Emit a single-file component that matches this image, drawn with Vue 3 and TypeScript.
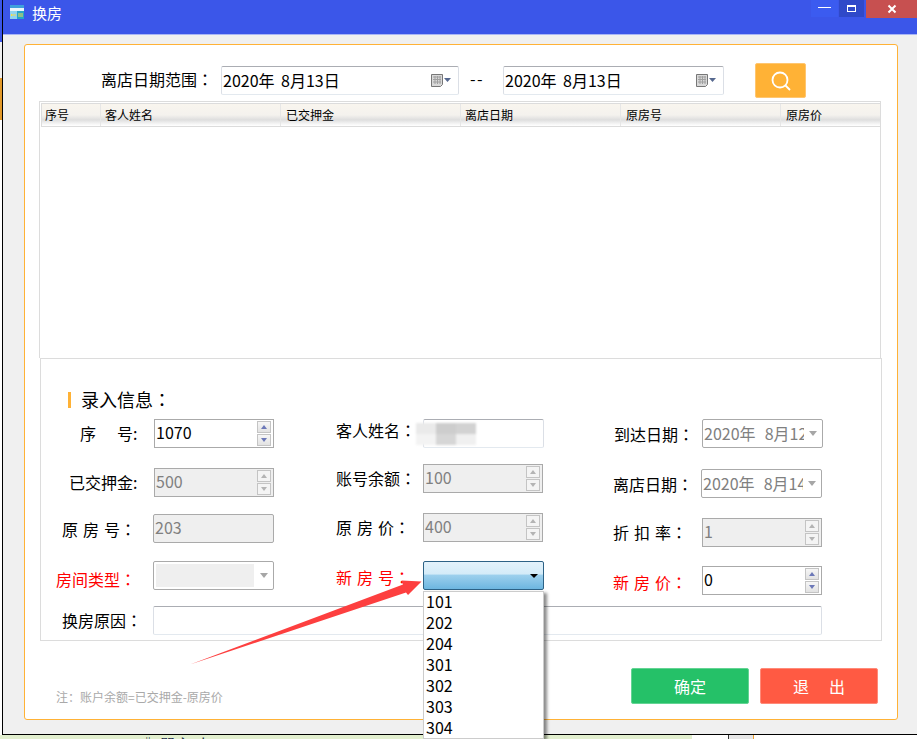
<script setup lang="ts">
type Field = {
  label: string
  kind: 'spin' | 'input' | 'date' | 'combo' | 'open'
  value?: string
  off?: boolean
  red?: boolean
  wide?: boolean
  half?: boolean
  left: number
  top: number
  width: number
  right?: number
  shift?: number
  blur?: boolean
}

const columnNames = ['序号', '客人姓名', '已交押金', '离店日期', '原房号', '原房价']
const roomOptions = ['101', '202', '204', '301', '302', '303', '304']

const columns: { width: number; fields: Field[] }[] = [
  {
    width: 233,
    fields: [
      { label: '序', kind: 'spin', value: '1070', left: 39, top: 0, width: 120, half: true, shift: -2 },
      { label: '已交押金:', kind: 'spin', value: '500', off: true, left: 28, top: 20, width: 120, shift: -2 },
      { label: '原房号：', kind: 'input', value: '203', off: true, wide: true, left: 21, top: 17, width: 121, shift: 0 },
      { label: '房间类型：', kind: 'combo', off: true, red: true, left: 15, top: 18, width: 121, shift: 6 },
    ],
  },
  {
    width: 270,
    fields: [
      { label: '客人姓名：', kind: 'input', left: 62, top: 0, width: 121, shift: -8, blur: true },
      { label: '账号余额：', kind: 'spin', value: '100', off: true, left: 62, top: 16, width: 120, right: 1, shift: -2 },
      { label: '原房价：', kind: 'spin', value: '400', off: true, wide: true, left: 62, top: 20, width: 120, right: 1, shift: -2 },
      { label: '新房号：', kind: 'open', red: true, wide: true, left: 62, top: 19, width: 121, shift: 2 },
    ],
  },
  {
    width: 279,
    fields: [
      { label: '到达日期：', kind: 'date', value: '2020年  8月12日', left: 70, top: 0, width: 121, shift: 0 },
      { label: '离店日期：', kind: 'date', value: '2020年  8月14日', left: 69, top: 21, width: 121, right: 1, shift: 0 },
      { label: '折扣率：', kind: 'spin', value: '1', off: true, wide: true, left: 69, top: 20, width: 120, right: 1, shift: -2 },
      { label: '新房价：', kind: 'spin', value: '0', red: true, wide: true, left: 69, top: 19, width: 120, right: 1, shift: 2 },
    ],
  },
]

const stem = (label: string) => (label.endsWith('：') ? label.slice(0, -1) : label)
</script>

<template>
  <div class="screen">
    <div class="top">
      <div class="edge">
        <i class="edge-blue"></i>
        <i class="edge-pale"></i>
        <i class="edge-orange"></i>
      </div>
      <div class="window">
        <header class="titlebar">
          <svg class="app-icon" width="14" height="14" viewBox="0 0 14 14">
            <rect width="14" height="3" fill="#3d9fdc" />
            <rect y="3" width="14" height="3" fill="#eaf4fb" />
            <rect y="6" width="7" height="8" fill="#8fd3ef" />
            <rect x="7" y="6" width="7" height="8" fill="#27a5c9" />
            <path d="M1 10h5M1 10l1-1M1 10l1 1" stroke="#f5dc4a" fill="none" />
            <path d="M8 9h5M8 11h5" stroke="#f5dc4a" />
          </svg>
          <span class="title-text">换房</span>
          <div class="win-buttons">
            <button class="win-btn win-min"><i></i></button>
            <button class="win-btn win-max"><i></i></button>
            <button class="win-btn win-close">
              <svg width="10" height="10" viewBox="0 0 10 10">
                <path d="M1.5 1.5l7 7M8.5 1.5l-7 7" stroke="#fff" stroke-width="2" />
              </svg>
            </button>
          </div>
        </header>

        <div class="body">
          <section class="card">
            <div class="filter">
              <span class="filter-label">离店日期范围<span class="colon">：</span></span>
              <div class="picker picker-a">
                <span class="date-text">2020年  8月13日</span>
                <svg width="20" height="13" viewBox="0 0 20 13">
                  <path d="M.5.5h11v10l-2 2h-9z" fill="#d9d9d9" stroke="#777" />
                  <path d="M2 3h8M2 5.5h8M2 8h8M4 2v8M6.5 2v8M9 2v8" stroke="#a0a0a0" />
                  <path d="M13 4h7l-3.500 4z" fill="#56688f" />
                </svg>
              </div>
              <span class="dash">--</span>
              <div class="picker picker-b">
                <span class="date-text">2020年  8月13日</span>
                <svg width="20" height="13" viewBox="0 0 20 13">
                  <path d="M.5.5h11v10l-2 2h-9z" fill="#d9d9d9" stroke="#777" />
                  <path d="M2 3h8M2 5.5h8M2 8h8M4 2v8M6.5 2v8M9 2v8" stroke="#a0a0a0" />
                  <path d="M13 4h7l-3.500 4z" fill="#56688f" />
                </svg>
              </div>
              <button class="search">
                <svg width="22" height="22" viewBox="0 0 22 22">
                  <circle cx="10" cy="10" r="7.500" fill="none" stroke="#fff" stroke-width="1.800" />
                  <path d="M15.500 15.500l4.500 4.500" stroke="#fff" stroke-width="1.800" />
                </svg>
              </button>
            </div>

            <div class="table">
              <div class="thead">
                <div v-for="name in columnNames" :key="name" class="th">{{ name }}</div>
              </div>
            </div>

            <div class="panel">
              <h3 class="panel-title"><i class="title-bar"></i><span>录入信息<span class="colon">：</span></span></h3>
              <div class="columns">
                <div v-for="(col, c) in columns" :key="c" class="column" :style="{ width: col.width + 'px' }">
                  <div
                    v-for="f in col.fields"
                    :key="f.label"
                    class="field"
                    :style="{ marginTop: f.top + 'px' }"
                  >
                    <span
                      class="label"
                      :class="{ red: f.red, wide: f.wide, half: f.half }"
                      :style="{ marginLeft: f.left + 'px', marginTop: (f.shift ?? 0) + 'px' }"
                    >{{ stem(f.label) }}<span v-if="f.label.endsWith('：')" class="colon">：</span><template v-if="f.half"><b class="label-gap"></b>号:</template></span>
                    <div
                      class="control"
                      :class="[f.kind, { off: f.off }]"
                      :style="{ width: f.width + 'px', marginRight: (f.right ?? 0) + 'px' }"
                    >
                      <template v-if="f.kind === 'spin'">
                        <span class="value">{{ f.value }}</span>
                        <span class="spinner">
                          <i class="spin-up"></i>
                          <i class="spin-down"></i>
                        </span>
                      </template>
                      <span v-else-if="f.kind === 'input'" class="value">{{ f.value }}</span>
                      <template v-else-if="f.kind === 'date'">
                        <span class="value clip">{{ f.value }}</span>
                        <i class="caret-gray"></i>
                      </template>
                      <template v-else-if="f.kind === 'combo'">
                        <span class="combo-fill"></span>
                        <i class="caret-gray"></i>
                      </template>
                      <template v-else-if="f.kind === 'open'">
                        <i class="caret-black"></i>
                        <ul class="menu">
                          <li v-for="room in roomOptions" :key="room">{{ room }}</li>
                        </ul>
                      </template>
                      <div v-if="f.blur" class="mosaic">
                        <i class="m1"></i><i class="m2"></i><i class="m3"></i>
                        <i class="m4"></i><i class="m5"></i><i class="m6"></i>
                      </div>
                    </div>
                  </div>
                </div>
              </div>
              <div class="reason">
                <span class="label reason-label">换房原因<span class="colon">：</span></span>
                <div class="control input reason-input"></div>
              </div>
            </div>

            <footer class="footer">
              <span class="note">注：账户余额=已交押金-原房价</span>
              <button class="action ok">确定</button>
              <button class="action quit">退<b class="quit-gap"></b>出</button>
            </footer>
          </section>
        </div>
      </div>
    </div>
    <div class="bottom">
      <div class="bottom-green"><span class="peek">‖ 單主 人</span></div>
      <div class="bottom-white"></div>
      <div class="bottom-gray"></div>
      <div class="bottom-end"></div>
    </div>

    <svg class="arrow" width="917" height="739" viewBox="0 0 917 739">
      <path d="M190 664.500L403 584.500L401.500 580.500L421.500 581.500L408 595L406 592.500Z" fill="#fd3f3f" />
    </svg>
  </div>
</template>

<style>
html,
body {
  margin: 0;
  background: #fff;
}
</style>

<style scoped>
* {
  box-sizing: border-box;
}
.screen {
  position: relative;
  width: 917px;
  height: 739px;
  overflow: hidden;
  font-family: "Noto Sans CJK SC", "Noto Sans", sans-serif;
  font-size: 16px;
  color: #000;
}
.colon {
  font-family: "Noto Sans CJK TC", "Noto Sans CJK SC", sans-serif;
  letter-spacing: 0;
}
.top {
  display: flex;
  height: 735px;
}
.edge {
  width: 2px;
  display: flex;
  flex-direction: column;
  background: #fff;
}
.edge i {
  display: block;
}
.edge-blue {
  height: 42px;
  background: #3b56e9;
}
.edge-pale {
  height: 36px;
  background: #f0f0f0;
}
.edge-orange {
  height: 42px;
  background: #e39a2b;
}
.window {
  flex: 1;
  display: flex;
  flex-direction: column;
  border-left: 1px solid #000;
  border-bottom: 1px solid #000;
  background: #f0f0f0;
}
.titlebar {
  height: 35px;
  flex: none;
  display: flex;
  align-items: flex-start;
  padding-left: 7px;
  background: #3b56e9;
  border-bottom: 1px solid #a9b6f5;
}
.app-icon {
  margin-top: 5px;
}
.title-text {
  margin-left: 8px;
  margin-top: 2px;
  font-size: 15px;
  line-height: 21px;
  color: #fff;
}
.win-buttons {
  margin-left: auto;
  display: flex;
}
.win-btn {
  display: flex;
  align-items: center;
  justify-content: center;
  padding: 0;
  border: 0;
}
.win-min {
  width: 27px;
  height: 17px;
  margin-right: 1px;
  background: #3b5bf0;
}
.win-min i {
  width: 13px;
  height: 1px;
  margin-bottom: 3px;
  background: #fff;
}
.win-max {
  width: 25px;
  height: 17px;
  margin-right: 2px;
  background: #2f49c9;
}
.win-max i {
  width: 9px;
  height: 7px;
  margin-bottom: 1px;
  border: 1px solid #fff;
  border-top-width: 2px;
}
.win-close {
  width: 51px;
  height: 18px;
  background: #c75050;
}
.body {
  padding: 9px 19px 0 21px;
}
.card {
  height: 676px;
  border: 1px solid #ffb236;
  border-radius: 3px;
  background: #fff;
}
.filter {
  display: flex;
  align-items: center;
  height: 35px;
  margin-top: 18px;
  padding-left: 76px;
}
.filter-label {
  width: 120px;
  margin-bottom: 3px;
}
.picker {
  height: 29px;
  display: flex;
  align-items: center;
  justify-content: space-between;
  padding: 0 7px 0 1px;
  border: 1px solid #dbdfe6;
  border-top-color: #abadb3;
  border-bottom-color: #e3e9ef;
  border-radius: 2px;
}
.picker-a {
  width: 238px;
}
.picker-b {
  width: 221px;
}
.date-text {
  white-space: pre;
  word-spacing: 3px;
  margin-top: -2px;
}
.dash {
  width: 44px;
  padding-left: 11px;
  letter-spacing: 1.500px;
  margin-bottom: 5px;
}
.search {
  width: 51px;
  height: 35px;
  margin-left: 31px;
  display: flex;
  align-items: center;
  justify-content: center;
  padding: 0;
  border: 1px solid #ffc670;
  border-radius: 2px;
  background: #ffb236;
}
.table {
  width: 842px;
  height: 257px;
  margin: 3px 0 0 14px;
  padding: 1px;
  border: 1px solid #dcdcdc;
  border-bottom: 0;
}
.thead {
  display: flex;
  height: 24px;
  width: 839px;
  border: 1px solid #dcdcdc;
  border-right: 0;
  background: linear-gradient(#f9f5ee 0%, #f4f2ee 50%, #dedede 72%, #f5f5f5 90%, #fff 100%);
}
.th {
  font-size: 12px;
  line-height: 22px;
  padding-left: 4px;
  border-right: 1px solid #e6e6e6;
  flex: none;
}
.th:nth-child(1) {
  width: 59px;
  padding-left: 3px;
}
.th:nth-child(2) {
  width: 180px;
}
.th:nth-child(3) {
  width: 180px;
  padding-left: 5px;
}
.th:nth-child(4),
.th:nth-child(5) {
  width: 160px;
}
.th:nth-child(5) {
  padding-left: 5px;
}
.th:nth-child(6) {
  width: 99px;
  padding-left: 5px;
  border-right: 0;
}
.panel {
  width: 842px;
  height: 283px;
  margin-left: 15px;
  border: 1px solid #dcdcdc;
  padding-top: 31px;
}
.panel-title {
  display: flex;
  align-items: center;
  height: 20px;
  margin: 0 0 9px 27px;
  font-size: 18px;
  font-weight: 400;
  line-height: 18px;
}
.title-bar {
  width: 3px;
  height: 16px;
  margin-right: 10px;
  background: #ffb236;
}
.panel-title span {
  margin-top: -2px;
}
.panel-title .colon {
  margin-top: 0;
}
.columns {
  display: flex;
}
.column {
  flex: none;
}
.field {
  display: flex;
  align-items: center;
  height: 29px;
}
.label {
  white-space: pre;
  line-height: 20px;
}
.label.wide {
  letter-spacing: 5px;
}
.label.wide .colon {
  margin-left: -5px;
}
.label-gap {
  display: inline-block;
  width: 21px;
}
.red {
  color: #f00;
}
.control {
  position: relative;
  height: 29px;
  margin-left: auto;
  display: flex;
  align-items: center;
  flex: none;
  border: 1px solid #aaa;
  background: #fff;
  padding-left: 1px;
}
.control.off {
  background: #efefef;
  color: #808080;
}
.control .value {
  line-height: 24px;
  margin-top: -4px;
}
.control.input,
.control.date,
.control.combo {
  border-radius: 2px;
}
.control.input:not(.off) {
  border-color: #dbdfe6;
  border-top-color: #abadb3;
  border-bottom-color: #e3e9ef;
}
.control.date {
  color: #808080;
  padding-right: 4px;
}
.control.date .value {
  margin-top: -2px;
}
.clip {
  flex: 1;
  overflow: hidden;
  white-space: pre;
  word-spacing: 1px;
  margin-right: 5px;
}
.caret-gray {
  flex: none;
  width: 0;
  height: 0;
  border: 4px solid transparent;
  border-bottom: 0;
  border-top: 5px solid #a6a6a6;
  margin-right: 1px;
}
.control.combo {
  background: #fff;
  padding: 2px 4px 2px 2px;
  justify-content: space-between;
}
.combo-fill {
  width: 98px;
  height: 23px;
  background: #efefef;
}
.spinner {
  position: absolute;
  right: 2px;
  top: 1px;
  width: 14px;
  display: flex;
  flex-direction: column;
  gap: 1px;
}
.spinner i {
  display: flex;
  align-items: center;
  justify-content: center;
  height: 12px;
  border: 1px solid #c4c4c4;
  background: linear-gradient(#f6f6f6, #e2e2e2);
}
.spinner i::after {
  content: "";
  border: 3px solid transparent;
}
.spin-up::after {
  border-top: 0 !important;
  border-bottom: 4px solid #6c78b8 !important;
}
.spin-down::after {
  border-bottom: 0 !important;
  border-top: 4px solid #6c78b8 !important;
}
.off .spin-up::after {
  border-bottom-color: #b4b4b4 !important;
}
.off .spin-down::after {
  border-top-color: #b4b4b4 !important;
}
.off .spinner i {
  background: #f4f4f4;
}
.control.open {
  justify-content: flex-end;
  padding-right: 5px;
  border: 1px solid #2d6286;
  border-radius: 2px;
  background: linear-gradient(#e3f2fb 0%, #d3ebf8 45%, #9dd0ed 48%, #6db6e0 100%);
}
.caret-black {
  width: 0;
  height: 0;
  border: 4px solid transparent;
  border-bottom: 0;
  border-top: 4px solid #000;
}
.menu {
  position: absolute;
  z-index: 3;
  left: -1px;
  top: 29px;
  width: 121px;
  height: 148px;
  margin: 0;
  padding: 0 0 0 2px;
  list-style: none;
  background: #fff;
  border: 1px solid #ccc;
  box-shadow: 3px 2px 3px rgba(0, 0, 0, 0.45);
}
.menu li {
  height: 21px;
  line-height: 19px;
}
.mosaic {
  position: absolute;
  left: -8px;
  top: 3px;
  width: 60px;
  height: 22px;
  display: grid;
  grid-template-columns: repeat(3, 20px);
  grid-template-rows: repeat(2, 11px);
  filter: blur(1.200px);
}
.m1 {
  background: #eaeaea;
}
.m2 {
  background: #cdcdcd;
}
.m3 {
  background: #d2d2d2;
}
.m4 {
  background: #f3f3f3;
}
.m5 {
  background: #d6d6d6;
}
.m6 {
  background: #f0f0f0;
}
.reason {
  display: flex;
  align-items: center;
  height: 29px;
  margin-top: 11px;
}
.reason-label {
  margin-left: 21px;
  margin-bottom: 2px;
  width: 91px;
  flex: none;
}
.reason-input {
  width: 669px;
  margin-left: 0;
}
.footer {
  display: flex;
  align-items: flex-start;
  padding: 27px 19px 0 31px;
}
.note {
  margin-top: 21px;
  font-size: 12px;
  line-height: 16px;
  color: #a9a9a9;
}
.action {
  width: 118px;
  height: 36px;
  padding: 0;
  border-radius: 2px;
  font: inherit;
  color: #fff;
}
.ok {
  margin-left: auto;
  background: #25c168;
  border: 1px solid #63d493;
}
.quit {
  margin-left: 11px;
  background: #ff5a43;
  border: 1px solid #ff8a79;
}
.quit-gap {
  display: inline-block;
  width: 20px;
}
.bottom {
  display: flex;
  height: 4px;
  overflow: hidden;
}
.bottom-green {
  width: 692px;
  background: #e2efcf;
  padding-left: 140px;
}
.peek {
  display: block;
  color: #1c2b4a;
  line-height: 18px;
  white-space: pre;
}
.bottom-white {
  width: 36px;
  background: #fff;
}
.bottom-gray {
  width: 26px;
  background: #e6e6e6;
  border-left: 1px solid #333;
  border-right: 1px solid #f0a030;
}
.bottom-end {
  flex: 1;
  background: #fff;
}
.arrow {
  position: absolute;
  left: 0;
  top: 0;
  pointer-events: none;
  z-index: 5;
}
</style>
